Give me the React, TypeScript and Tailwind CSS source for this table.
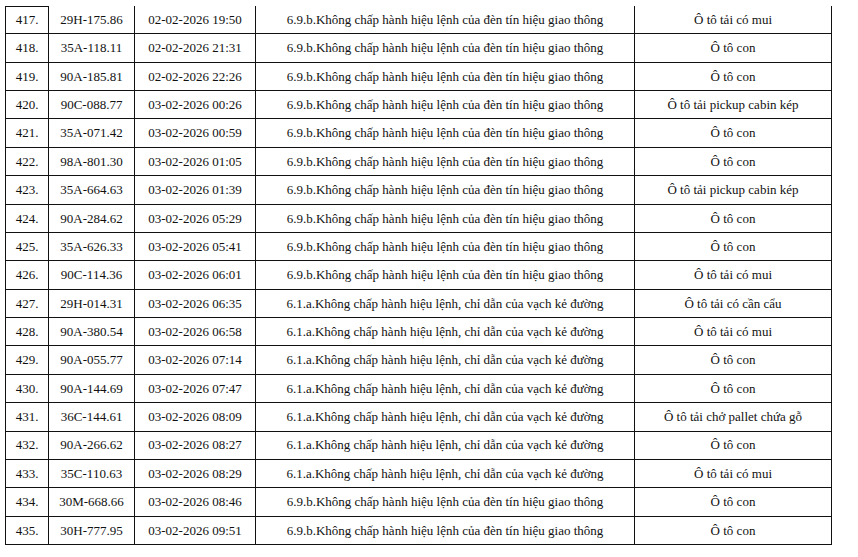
const A = "6.9.b.Không chấp hành hiệu lệnh của đèn tín hiệu giao thông";
const B = "6.1.a.Không chấp hành hiệu lệnh, chỉ dẫn của vạch kẻ đường";

const rows: [string, string, string, string, string][] = [
  ["417.", "29H-175.86", "02-02-2026 19:50", A, "Ô tô tải có mui"],
  ["418.", "35A-118.11", "02-02-2026 21:31", A, "Ô tô con"],
  ["419.", "90A-185.81", "02-02-2026 22:26", A, "Ô tô con"],
  ["420.", "90C-088.77", "03-02-2026 00:26", A, "Ô tô tải pickup cabin kép"],
  ["421.", "35A-071.42", "03-02-2026 00:59", A, "Ô tô con"],
  ["422.", "98A-801.30", "03-02-2026 01:05", A, "Ô tô con"],
  ["423.", "35A-664.63", "03-02-2026 01:39", A, "Ô tô tải pickup cabin kép"],
  ["424.", "90A-284.62", "03-02-2026 05:29", A, "Ô tô con"],
  ["425.", "35A-626.33", "03-02-2026 05:41", A, "Ô tô con"],
  ["426.", "90C-114.36", "03-02-2026 06:01", A, "Ô tô tải có mui"],
  ["427.", "29H-014.31", "03-02-2026 06:35", B, "Ô tô tải có cần cẩu"],
  ["428.", "90A-380.54", "03-02-2026 06:58", B, "Ô tô tải có mui"],
  ["429.", "90A-055.77", "03-02-2026 07:14", B, "Ô tô con"],
  ["430.", "90A-144.69", "03-02-2026 07:47", B, "Ô tô con"],
  ["431.", "36C-144.61", "03-02-2026 08:09", B, "Ô tô tải chở pallet chứa gỗ"],
  ["432.", "90A-266.62", "03-02-2026 08:27", B, "Ô tô con"],
  ["433.", "35C-110.63", "03-02-2026 08:29", B, "Ô tô tải có mui"],
  ["434.", "30M-668.66", "03-02-2026 08:46", A, "Ô tô con"],
  ["435.", "30H-777.95", "03-02-2026 09:51", A, "Ô tô con"],
];

export default function App() {
  return (
    <div
      className="w-[858px] h-[557px] bg-white pt-[6px] pl-[5px] text-[13px] text-[#111]"
      style={{ fontFamily: '"Liberation Serif", "Times New Roman", serif' }}
    >
      <div className="grid w-[827px] h-[539px] grid-cols-[44px_86px_121px_379px_197px] grid-rows-[repeat(19,1fr)]">
        {rows.map((r, i) =>
          r.map((cell, j) => (
            <div
              key={`${i}-${j}`}
              className={`flex items-center justify-center border-r border-b border-[#111] whitespace-nowrap ${
                j === 0 ? "border-l" : ""
              } ${i === 0 && j === 0 ? "border-t" : ""}`}
            >
              {cell}
            </div>
          ))
        )}
      </div>
    </div>
  );
}
